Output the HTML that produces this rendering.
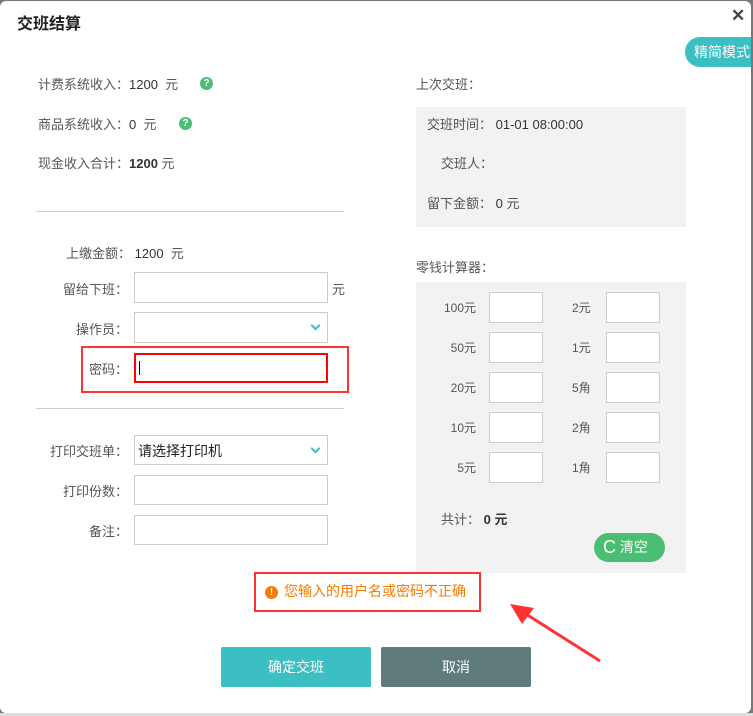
<!DOCTYPE html>
<html><head><meta charset="utf-8"><style>
*{margin:0;padding:0;box-sizing:border-box}
body{width:753px;height:716px;overflow:hidden;background:#777;font-family:"Liberation Sans","Noto Sans CJK SC",sans-serif;font-size:13px;color:#555;position:relative}
.dlg{position:absolute;left:0;top:1px;width:751px;height:712px;background:#fff;border-radius:6px;overflow:hidden}
.a{position:absolute;white-space:nowrap}
.in{position:absolute;border:1px solid #ccc;background:#fff}
.chev{position:absolute;right:8px;top:9px;width:7px;height:7px;border-right:2px solid #3bbfc2;border-bottom:2px solid #3bbfc2;transform:rotate(45deg)}
.q{position:absolute;width:13px;height:13px;border-radius:50%;background:#4cbe74;color:#fff;font-size:10px;text-align:center;line-height:13px;font-weight:bold}
.gray{position:absolute;background:#f2f2f2}
.lbl{position:absolute;text-align:right;width:90px;white-space:nowrap}
.hr{position:absolute;height:1px;background:#ccc;left:36px;width:308px}
</style></head><body>
<div class="a" style="left:0;top:713px;width:753px;height:3px;background:#ddd"></div>
<div class="dlg">
<div class="a" style="left:17px;top:9px;font-size:16px;font-weight:bold;color:#222">交班结算</div>
<div class="a" style="left:731px;top:5px;font-size:17px;color:#444;font-weight:bold">✕</div>
<div class="a" style="left:685px;top:36px;width:70px;height:30px;background:#3bbfc2;border-radius:15px 0 0 15px;color:#fff;font-size:14px;line-height:30px;padding-left:9px">精简模式</div>

<div class="a" style="left:38px;top:73px">计费系统收入：<span style="color:#333">1200</span>&nbsp; 元</div>
<div class="q" style="left:200px;top:76px">?</div>
<div class="a" style="left:38px;top:113px">商品系统收入：<span style="color:#333">0</span>&nbsp; 元</div>
<div class="q" style="left:179px;top:116px">?</div>
<div class="a" style="left:38px;top:152px">现金收入合计：<b style="color:#333">1200</b> 元</div>
<div class="hr" style="top:210px"></div>

<div class="a" style="left:66px;top:242px">上缴金额：&nbsp;<span style="color:#333">1200</span>&nbsp; 元</div>
<div class="lbl" style="left:38px;top:278px">留给下班：</div>
<div class="in" style="left:134px;top:271px;width:194px;height:31px"></div>
<div class="a" style="left:332px;top:278px">元</div>
<div class="lbl" style="left:38px;top:318px">操作员：</div>
<div class="in" style="left:134px;top:311px;width:194px;height:31px"><div class="chev"></div></div>
<div class="a" style="left:81px;top:345px;width:268px;height:47px;border:2px solid #f33"></div>
<div class="lbl" style="left:38px;top:358px">密码：</div>
<div class="a" style="left:134px;top:352px;width:194px;height:30px;border:2px solid #f00"><div style="position:absolute;left:3px;top:6px;width:1px;height:14px;background:#000"></div></div>
<div class="hr" style="top:407px"></div>

<div class="lbl" style="left:38px;top:440px">打印交班单：</div>
<div class="in" style="left:134px;top:434px;width:194px;height:30px;color:#222;font-size:14px;padding:5px 0 0 3px">请选择打印机<div class="chev"></div></div>
<div class="lbl" style="left:38px;top:480px">打印份数：</div>
<div class="in" style="left:134px;top:474px;width:194px;height:30px"></div>
<div class="lbl" style="left:38px;top:520px">备注：</div>
<div class="in" style="left:134px;top:514px;width:194px;height:30px"></div>

<div class="a" style="left:416px;top:73px">上次交班：</div>
<div class="gray" style="left:416px;top:106px;width:270px;height:120px"></div>
<div class="a" style="left:427px;top:113px">交班时间：&nbsp;<span style="color:#333">01-01 08:00:00</span></div>
<div class="a" style="left:441px;top:152px">交班人：</div>
<div class="a" style="left:427px;top:192px">留下金额：&nbsp;<span style="color:#333">0</span> 元</div>

<div class="a" style="left:416px;top:256px">零钱计算器：</div>
<div class="gray" style="left:416px;top:281px;width:270px;height:291px"></div>
<div class="lbl" style="left:416px;top:298px;width:60px;font-size:12px">100元</div>
<div class="lbl" style="left:416px;top:338px;width:60px;font-size:12px">50元</div>
<div class="lbl" style="left:416px;top:378px;width:60px;font-size:12px">20元</div>
<div class="lbl" style="left:416px;top:418px;width:60px;font-size:12px">10元</div>
<div class="lbl" style="left:416px;top:458px;width:60px;font-size:12px">5元</div>
<div class="in" style="left:489px;top:291px;width:54px;height:31px"></div>
<div class="in" style="left:489px;top:331px;width:54px;height:31px"></div>
<div class="in" style="left:489px;top:371px;width:54px;height:31px"></div>
<div class="in" style="left:489px;top:411px;width:54px;height:31px"></div>
<div class="in" style="left:489px;top:451px;width:54px;height:31px"></div>
<div class="a" style="left:572px;top:298px;font-size:12px">2元</div>
<div class="a" style="left:572px;top:338px;font-size:12px">1元</div>
<div class="a" style="left:572px;top:378px;font-size:12px">5角</div>
<div class="a" style="left:572px;top:418px;font-size:12px">2角</div>
<div class="a" style="left:572px;top:458px;font-size:12px">1角</div>
<div class="in" style="left:606px;top:291px;width:54px;height:31px"></div>
<div class="in" style="left:606px;top:331px;width:54px;height:31px"></div>
<div class="in" style="left:606px;top:371px;width:54px;height:31px"></div>
<div class="in" style="left:606px;top:411px;width:54px;height:31px"></div>
<div class="in" style="left:606px;top:451px;width:54px;height:31px"></div>
<div class="a" style="left:441px;top:508px">共计：&nbsp;<b style="color:#333">0 元</b></div>
<div class="a" style="left:594px;top:532px;width:71px;height:29px;background:#4cbe74;border-radius:15px;color:#fff;font-size:14px;line-height:29px;padding-left:9px"><span style="font-size:18px;vertical-align:-1px">C</span> 清空</div>

<div class="a" style="left:254px;top:571px;width:227px;height:40px;border:2px solid #f33"></div>
<div class="a" style="left:265px;top:585px;width:13px;height:13px;border-radius:50%;background:#f77b00;color:#fff;font-size:10px;font-weight:bold;text-align:center;line-height:13px">!</div>
<div class="a" style="left:284px;top:580px;color:#f77b00;font-size:14px">您输入的用户名或密码不正确</div>
<svg class="a" style="left:500px;top:595px" width="110" height="75"><line x1="18" y1="13" x2="100" y2="65" stroke="#f33" stroke-width="3"/><polygon points="10,8 34,12 22,28" fill="#f33"/></svg>

<div class="a" style="left:221px;top:646px;width:150px;height:40px;background:#3bbfc2;border-radius:2px;color:#fff;font-size:14px;text-align:center;line-height:40px">确定交班</div>
<div class="a" style="left:381px;top:646px;width:150px;height:40px;background:#607b7b;border-radius:2px;color:#fff;font-size:14px;text-align:center;line-height:40px">取消</div>
</div>
</body></html>
